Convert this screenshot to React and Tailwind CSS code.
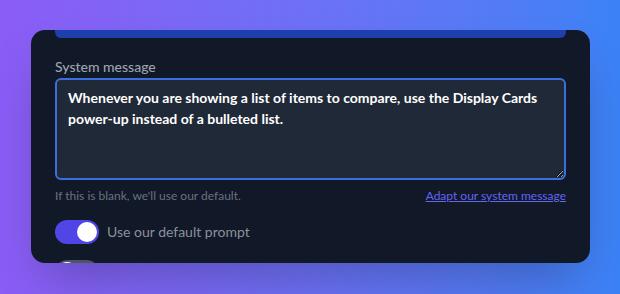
import React from "react";

function Toggle({ on }) {
  return (
    <div
      className={
        "flex h-6 w-11 shrink-0 items-center rounded-full p-[2px] " +
        (on ? "justify-end bg-[#4f46e5]" : "justify-start bg-[#4b5563]")
      }
    >
      <div className="h-5 w-5 rounded-full bg-white" />
    </div>
  );
}

export default function App() {
  return (
    <div
      className="flex h-[294px] w-[620px] items-start justify-center bg-linear-to-r from-[#8b5cf6] to-[#3b82f6] pt-[30px]"
      style={{ fontFamily: "Lato, 'Noto Sans', sans-serif" }}
    >
      <div className="ml-[1px] flex h-[233px] w-[559px] flex-col overflow-hidden rounded-[14px] bg-[#111827] px-6 shadow-2xl">
        <div className="h-2 shrink-0 rounded-b-md bg-[#1e40af]" />
        <label className="mt-[19px] shrink-0 text-sm font-medium leading-5 text-[#9ca3af]">System message</label>
        <textarea
          className="mt-[1px] h-[102px] w-full shrink-0 resize-y rounded-md border-2 border-[#3b6fe0] bg-[#1f2937] px-[11px] py-[7px] text-sm font-bold leading-[21px] text-white outline-none [color-scheme:dark]"
          defaultValue="Whenever you are showing a list of items to compare, use the Display Cards power-up instead of a bulleted list."
        />
        <div className="mt-[6px] flex shrink-0 items-center justify-between text-xs leading-5">
          <span className="text-[#6b7280]">If this is blank, we'll use our default.</span>
          <a href="#" className="text-[#6366f1] underline">Adapt our system message</a>
        </div>
        <div className="mt-[14px] flex shrink-0 items-center gap-2">
          <Toggle on />
          <span className="text-sm text-[#8b919b]">Use our default prompt</span>
        </div>
        <div className="mt-4 flex shrink-0 items-center gap-2">
          <Toggle />
        </div>
      </div>
    </div>
  );
}
